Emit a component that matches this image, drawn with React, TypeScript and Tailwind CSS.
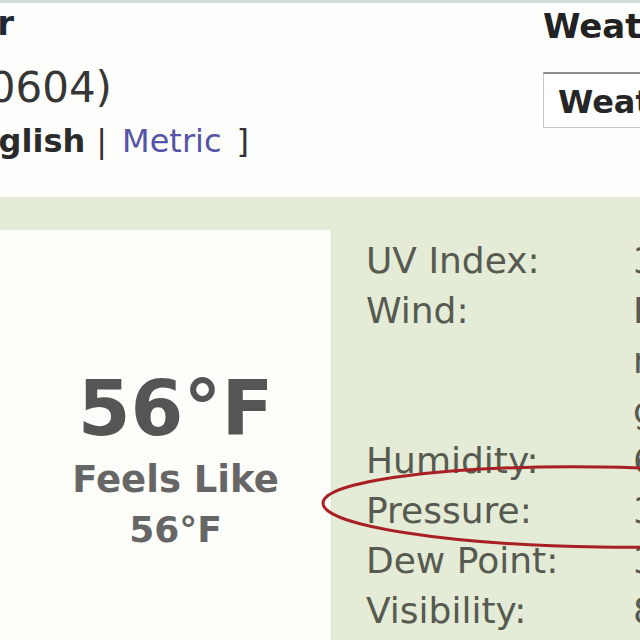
const rows: { label: string; value: string[] }[] = [
  { label: 'UV Index:', value: ['3 Moderate'] },
  { label: 'Wind:', value: ['From NW at', 'mph, with', 'gusts'] },
  { label: 'Humidity:', value: ['64%'] },
  { label: 'Pressure:', value: ['30.12 in'] },
  { label: 'Dew Point:', value: ['35°F'] },
  { label: 'Visibility:', value: ['8.0 miles'] },
]

export default function App() {
  return (
    <div className="relative w-[640px] h-[640px] overflow-hidden bg-white font-['DejaVu_Sans',sans-serif]">
      {/* Header */}
      <header className="h-[197px] border-t-[3px] border-[#d3d8d9] bg-[#fefefc] flex">
        <div className="w-[543px] shrink-0 flex flex-col">
          <div className="mt-[3px] w-[14px] flex justify-end whitespace-nowrap">
            <h1 className="shrink-0 text-[34px] leading-none font-bold text-[#1d2836]">Chicago Weather</h1>
          </div>
          <div className="mt-[27px] w-[112px] flex justify-end whitespace-nowrap">
            <span className="shrink-0 text-[42px] leading-none text-[#363636]">Chicago, IL (60604)</span>
          </div>
          <div className="mt-[16px] w-[249px] flex justify-end items-baseline whitespace-nowrap text-[32px] leading-none">
            <span className="shrink-0 text-[#2a2a2a]">
              [ <span className="font-bold">English</span>
            </span>
            <span className="shrink-0 ml-[11px] text-[#333]">|</span>
            <span className="shrink-0 ml-[15px] text-[#5454a8]">Metric</span>
            <span className="shrink-0 ml-[15px] text-[#333]">]</span>
          </div>
        </div>
        <div className="shrink-0 flex flex-col whitespace-nowrap">
          <h2 className="mt-[6px] text-[34px] leading-none font-bold text-[#222]">Weather Forecast</h2>
          <div className="mt-[29px] h-[56px] w-[400px] border border-[#c8c8c8] border-t-2 border-t-[#8d8d8d] bg-white pl-[14px] pt-[12px]">
            <span className="text-[32px] leading-none font-bold text-[#262626]">Weather Forecast</span>
          </div>
        </div>
      </header>

      {/* Conditions */}
      <section className="h-[443px] bg-[#e4ebd6] pt-[33px] flex">
        <div className="w-[331px] shrink-0 bg-[#fdfdfa] pl-5 flex flex-col items-center shadow-[1px_0_0_#dbe3cd]">
          <div className="mt-[141px] text-[76px] leading-none font-bold text-[#555] whitespace-nowrap">56°F</div>
          <div className="mt-[14px] text-[37px] leading-none font-bold text-[#666] whitespace-nowrap">Feels Like</div>
          <div className="mt-[14px] text-[36px] leading-none font-bold text-[#666] whitespace-nowrap">56°F</div>
        </div>
        <div className="shrink-0 pl-[35px] pt-[6px]">
          <div className="grid grid-cols-[267px_auto] text-[36px] leading-[50px] text-[#575a50] whitespace-nowrap">
            {rows.map((r) => (
              <div key={r.label} className="contents">
                <div>{r.label}</div>
                <div>
                  {r.value.map((v) => (
                    <div key={v}>{v}</div>
                  ))}
                </div>
              </div>
            ))}
          </div>
        </div>
      </section>

      {/* Annotation */}
      <svg className="absolute inset-0 pointer-events-none" width="640" height="640" viewBox="0 0 640 640">
        <ellipse cx="600" cy="507" rx="277" ry="40" transform="rotate(0.8 600 507)" fill="none" stroke="#a81f24" strokeWidth="3" />
      </svg>
    </div>
  )
}
